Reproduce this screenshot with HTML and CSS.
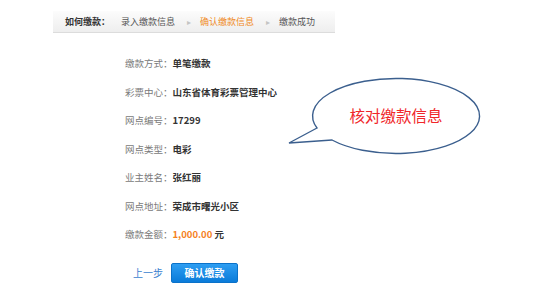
FILE: index.html
```html
<!DOCTYPE html>
<html>
<head>
    <title>确认缴款信息</title>
    <link rel="stylesheet" href="styles.css">
</head>
<body>
    <div class="steps">
        <span class="steps-title">如何缴款：</span>
        <span class="step">录入缴款信息</span>
        <span class="arrow">&#9656;</span>
        <span class="step current">确认缴款信息</span>
        <span class="arrow">&#9656;</span>
        <span class="step">缴款成功</span>
    </div>

    <div class="info">
        <div class="row"><span class="label">缴款方式：</span><span class="value">单笔缴款</span></div>
        <div class="row"><span class="label">彩票中心：</span><span class="value">山东省体育彩票管理中心</span></div>
        <div class="row"><span class="label">网点编号：</span><span class="value">17299</span></div>
        <div class="row"><span class="label">网点类型：</span><span class="value">电彩</span></div>
        <div class="row"><span class="label">业主姓名：</span><span class="value">张红丽</span></div>
        <div class="row"><span class="label">网点地址：</span><span class="value">荣成市曙光小区</span></div>
        <div class="row"><span class="label">缴款金额：</span><span class="value"><span class="money">1,000.00</span> 元</span></div>

        <div class="actions">
            <a href="#" class="back">上一步</a>
            <button class="confirm">确认缴款</button>
        </div>
    </div>

    <svg class="callout" width="210" height="95" viewBox="282 72 210 95">
        <path d="M317 128 L289 143 L332 140 A83.5 37.5 0 1 0 317 128 Z" fill="#fff" stroke="#3b5f8e" stroke-width="1.4"/>
        <text x="396" y="122" text-anchor="middle">核对缴款信息</text>
    </svg>
</body>
</html>
```

FILE: styles.css
```css
body {
    margin: 0;
    background: #fff;
    font-family: "Noto Sans CJK SC", "Liberation Sans", sans-serif;
    position: relative;
    width: 538px;
    height: 306px;
    overflow: hidden;
}

.steps {
    margin: 11px 0 0 53px;
    width: 270px;
    height: 21px;
    padding-left: 12px;
    display: flex;
    align-items: center;
    background: linear-gradient(#fcfcfc, #eeeeee);
    border-bottom: 1px solid #dcdcdc;
    font-size: 9px;
    color: #555;
}

.steps-title {
    font-weight: bold;
    color: #333;
    margin-right: 11px;
}

.step.current {
    color: #f08a24;
}

.arrow {
    color: #c4c4c4;
    font-size: 8px;
    margin: 0 9px 0 12px;
}

.info {
    padding: 16px 0 0 125px;
}

.row {
    height: 28.5px;
    display: flex;
    align-items: center;
    font-size: 9.5px;
}

.label {
    color: #7a7a7a;
}

.value {
    color: #333;
    font-weight: bold;
}

.money {
    color: #f5821f;
}

.actions {
    margin-top: 14px;
    display: flex;
    align-items: center;
}

.back {
    color: #3b7fcf;
    font-size: 10px;
    text-decoration: none;
    margin-left: 8px;
    width: 38px;
}

.confirm {
    width: 67px;
    height: 20px;
    border: 1px solid #0b72c9;
    border-radius: 2px;
    background: linear-gradient(#2e9ef2, #0a7bd9);
    color: #fff;
    font-family: "Noto Sans CJK SC", "Liberation Sans", sans-serif;
    font-size: 10px;
    font-weight: bold;
    padding: 0;
}

.callout {
    position: absolute;
    left: 282px;
    top: 72px;
}

.callout text {
    fill: #f0262a;
    font-size: 15.5px;
    font-family: "Noto Sans CJK SC", sans-serif;
}
```
